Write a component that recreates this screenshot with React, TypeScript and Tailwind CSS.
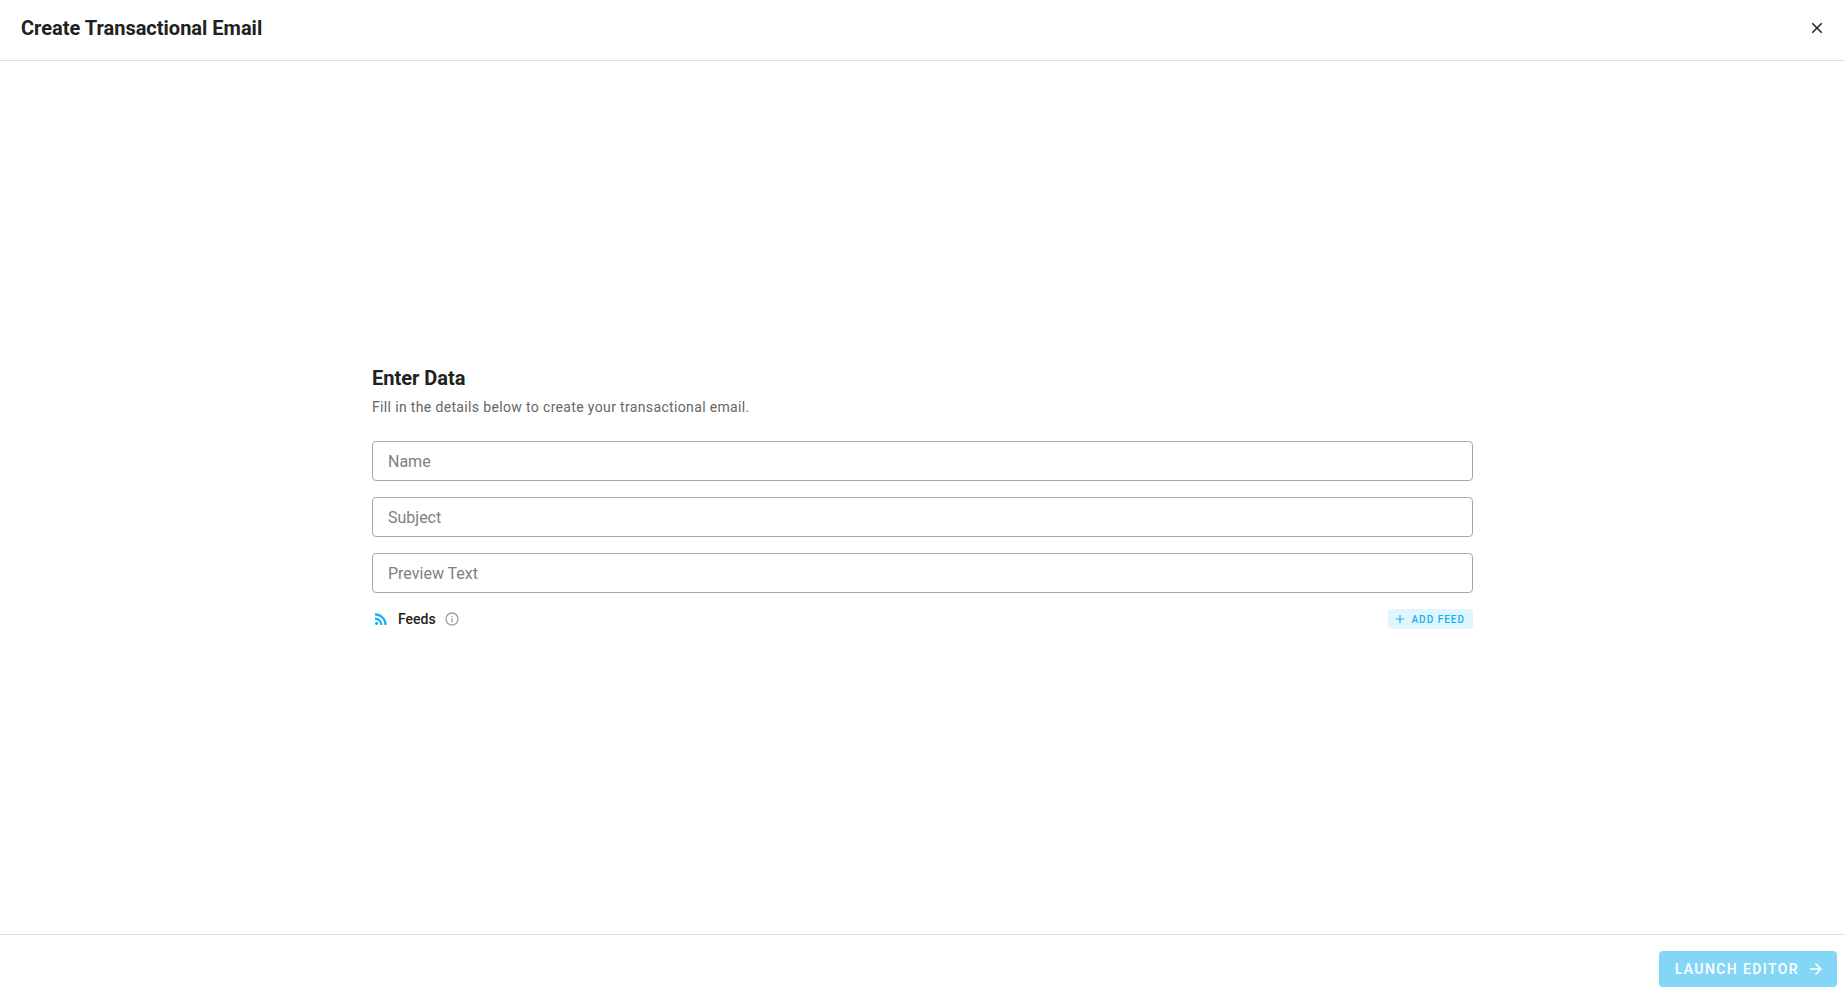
import React, { useState } from 'react';

const icons = {
  close:
    'M19,6.41L17.59,5L12,10.59L6.41,5L5,6.41L10.59,12L5,17.59L6.41,19L12,13.41L17.59,19L19,17.59L13.41,12L19,6.41Z',
  rss: 'M6.18,15.64A2.18,2.18 0 0,1 8.36,17.82C8.36,19 7.38,20 6.18,20C5,20 4,19 4,17.82A2.18,2.18 0 0,1 6.18,15.64M4,4.44A15.56,15.56 0 0,1 19.56,20H16.73A12.73,12.73 0 0,0 4,7.27V4.44M4,10.1A9.9,9.9 0 0,1 13.9,20H11.07A7.07,7.07 0 0,0 4,12.93V10.1Z',
  info: 'M11,9H13V7H11M12,20C7.59,20 4,16.41 4,12C4,7.59 7.59,4 12,4C16.41,4 20,7.59 20,12C20,16.41 16.41,20 12,20M12,2A10,10 0 0,0 2,12A10,10 0 0,0 12,22A10,10 0 0,0 22,12A10,10 0 0,0 12,2M11,17H13V11H11V17Z',
  plus: 'M19,13H13V19H11V13H5V11H11V5H13V11H19V13Z',
  arrowRight: 'M4,11V13H16L10.5,18.5L11.92,19.92L19.84,12L11.92,4.08L10.5,5.5L16,11H4Z',
};

function Icon({ name, className }: { name: keyof typeof icons; className: string }) {
  return (
    <svg viewBox="0 0 24 24" fill="currentColor" aria-hidden="true" className={className}>
      <path d={icons[name]} />
    </svg>
  );
}

const fields = [
  { id: 'name', label: 'Name' },
  { id: 'subject', label: 'Subject' },
  { id: 'previewText', label: 'Preview Text' },
];

export default function App() {
  const [values, setValues] = useState<Record<string, string>>({});

  const canLaunch = Boolean(values.name && values.subject);

  return (
    <div className="flex min-h-screen flex-col bg-white font-['Roboto',sans-serif] text-[#212121]">
      {/* Header */}
      <header className="flex items-center justify-between border-b border-[#e0e0e0] pt-3 pr-5 pb-4 pl-[21px]">
        <h1 className="text-xl leading-8 font-bold">Create Transactional Email</h1>
        <button type="button" aria-label="Close" className="flex h-8 w-4 items-center justify-center">
          <Icon name="close" className="size-[18px] shrink-0" />
        </button>
      </header>

      {/* Form */}
      <main className="flex flex-1 items-center justify-center px-6 pb-px">
        <form className="w-full max-w-[1101px]" onSubmit={(e) => e.preventDefault()}>
          <h2 className="text-xl leading-[26px] font-bold">Enter Data</h2>
          <p className="mt-1.5 text-sm leading-5 tracking-wide text-[#666666]">
            Fill in the details below to create your transactional email.
          </p>

          <div className="mt-6 flex flex-col gap-4">
            {fields.map((field) => (
              <input
                key={field.id}
                id={field.id}
                type="text"
                aria-label={field.label}
                placeholder={field.label}
                value={values[field.id] ?? ''}
                onChange={(e) => setValues((prev) => ({ ...prev, [field.id]: e.target.value }))}
                className="h-10 w-full rounded border border-[#a6a6a6] px-[15px] text-base placeholder-[#808080] focus:border-[#13b5ea] focus:outline-none"
              />
            ))}
          </div>

          <div className="mt-4 flex items-center justify-between">
            <div className="flex items-center">
              <Icon name="rss" className="size-[18px] text-[#13b0f0]" />
              <span className="ml-2 text-sm leading-5 font-medium">Feeds</span>
              <Icon name="info" className="ml-2 size-4 text-[#9e9e9e]" />
            </div>
            <button
              type="button"
              className="flex h-5 items-center rounded bg-[#e1f5fe] pr-2 pl-[5px] text-[10px] font-medium tracking-widest text-[#13b0f0]"
            >
              <Icon name="plus" className="mr-1 size-3.5" />
              ADD FEED
            </button>
          </div>
        </form>
      </main>

      {/* Footer */}
      <footer className="flex justify-end border-t border-[#e0e0e0] px-2 pt-4 pb-[9px]">
        <button
          type="button"
          disabled={!canLaunch}
          className="flex h-9 items-center rounded bg-[#03a9f4] pr-3 pl-4 text-sm font-medium tracking-widest text-white disabled:bg-[#84d6f7]"
        >
          LAUNCH EDITOR
          <Icon name="arrowRight" className="ml-2 size-[18px]" />
        </button>
      </footer>
    </div>
  );
}
